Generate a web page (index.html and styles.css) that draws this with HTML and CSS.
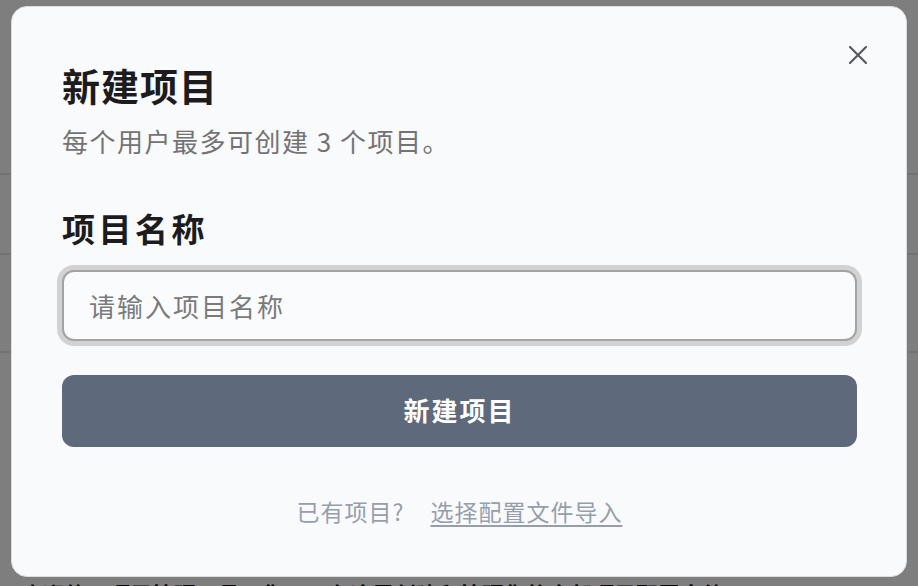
FILE: index.html
```html
<!DOCTYPE html>
<html lang="zh-CN">
<head>
<meta charset="utf-8">
<title>新建项目</title>
<link rel="stylesheet" href="styles.css">
</head>
<body>
<div class="page">
  <div class="row row-a"></div>
  <div class="row row-b"></div>
  <div class="row row-c"></div>
  <div class="row row-d"></div>
  <p class="page-text">欢迎使用项目管理工具，您可以在这里创建和管理您的全部项目配置文件。</p>
</div>
<div class="overlay">
  <div class="modal">
    <button class="close" aria-label="关闭">
      <svg width="20" height="20" viewBox="0 0 20 20"><path d="M2 2 L18 18 M18 2 L2 18" stroke="#555a60" stroke-width="2.2" stroke-linecap="round" fill="none"/></svg>
    </button>
    <h1 class="title">新建项目</h1>
    <p class="subtitle">每个用户最多可创建 3 个项目。</p>
    <h2 class="label">项目名称</h2>
    <div class="input">请输入项目名称</div>
    <button class="submit">新建项目</button>
    <p class="footer">已有项目?<a class="link">选择配置文件导入</a></p>
  </div>
</div>
</body>
</html>
```
FILE: styles.css
```css
html, body {
  margin: 0;
  padding: 0;
  height: 100%;
  overflow: hidden;
}
body {
  font-family: "Noto Sans CJK SC", "Noto Sans", sans-serif;
  background: #fff;
}
.page {
  display: flex;
  flex-direction: column;
}
.row {
  flex-shrink: 0;
  border-bottom: 2px solid #e8e8e8;
}
.row-a { height: 173px; }
.row-b { height: 78px; }
.row-c { height: 96px; }
.row-d { height: 225px; border-bottom: none; }
.page-text {
  flex-shrink: 0;
  margin: 0 0 0 20px;
  font-size: 22px;
  line-height: 30px;
  color: #111;
  font-weight: 700;
}
.overlay {
  position: fixed;
  inset: 0;
  background: rgba(0, 0, 0, 0.505);
  display: flex;
  align-items: flex-start;
  justify-content: flex-start;
  padding: 6px 0 0 11px;
}
.modal {
  position: relative;
  box-sizing: border-box;
  width: 896px;
  height: 571px;
  background: #f9fafc;
  border: 1.5px solid #dcdcdc;
  border-radius: 16px;
  padding: 56px 49px 0 50px;
  display: flex;
  flex-direction: column;
}
.close {
  position: absolute;
  top: 38px;
  right: 38px;
  width: 20px;
  height: 20px;
  padding: 0;
  border: none;
  background: none;
}
.close svg { display: block; }
.title {
  margin: 0;
  font-size: 38px;
  line-height: 44px;
  font-weight: 700;
  color: #1c1c1e;
  letter-spacing: 1px;
}
.subtitle {
  margin: 18px 0 0;
  font-size: 26px;
  line-height: 32px;
  color: #737373;
  letter-spacing: 1.5px;
}
.label {
  margin: 51px 0 0;
  font-size: 33px;
  line-height: 40px;
  font-weight: 700;
  color: #1c1c1e;
  letter-spacing: 3.5px;
}
.input {
  margin-top: 22px;
  height: 71px;
  box-sizing: border-box;
  border: 2px solid #a3a3a3;
  border-radius: 12px;
  box-shadow: 0 0 0 5px #d2d2d3;
  background: #fafbfd;
  display: flex;
  align-items: center;
  padding-left: 25px;
  font-size: 26px;
  color: #7a7a7a;
  letter-spacing: 2px;
}
.submit {
  margin-top: 34px;
  height: 72px;
  padding: 0 0 3px;
  border: none;
  border-radius: 12px;
  background: #5e6a7b;
  color: #fff;
  font-family: inherit;
  font-size: 26px;
  font-weight: 700;
  letter-spacing: 2px;
}
.footer {
  margin: 49px 0 0;
  text-align: center;
  font-size: 23px;
  line-height: 30px;
  color: #979eab;
  letter-spacing: 1px;
}
.link {
  margin-left: 26px;
  text-decoration: underline;
  text-underline-offset: 4px;
}
```
